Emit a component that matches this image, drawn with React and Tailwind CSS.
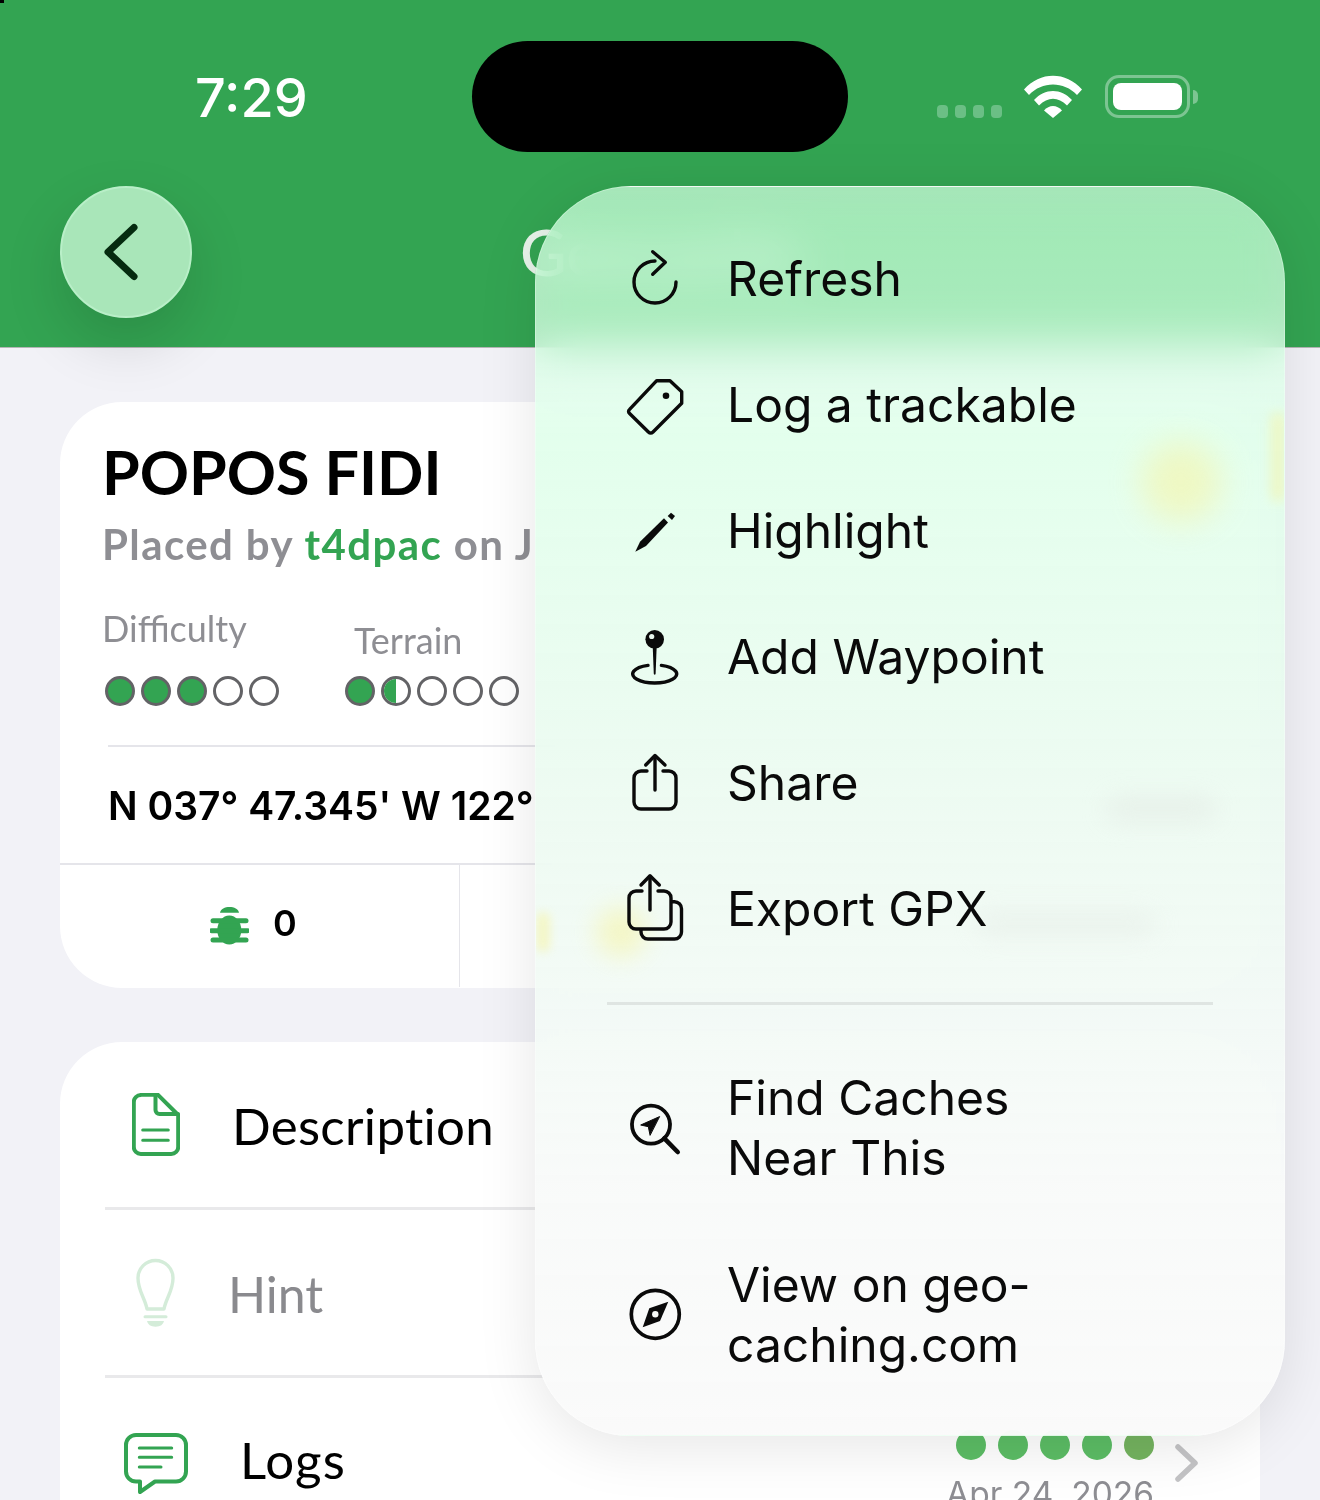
import { Fragment } from 'react';

const GREEN = '#33a452';

function Dot({ type }) {
  if (type === 'half') {
    return (
      <div className="w-[30px] h-[30px] rounded-full border-[3px] border-[#636366] overflow-hidden bg-white">
        <div className="w-1/2 h-full bg-[#33a452]"></div>
      </div>
    );
  }
  return (
    <div className={`w-[30px] h-[30px] rounded-full border-[3px] border-[#636366] ${type === 'full' ? 'bg-[#33a452]' : 'bg-white'}`}></div>
  );
}

function Rating({ values }) {
  return (
    <div className="flex gap-[6px]">
      {values.map((v, i) => (
        <Dot key={i} type={v} />
      ))}
    </div>
  );
}

// menu icons share an 80x80 box centred on the row
function MenuIcon({ children }) {
  return (
    <svg width="80" height="80" viewBox="0 0 80 80" fill="none" stroke="#0a0a0a" strokeWidth="3.4" strokeLinecap="round" strokeLinejoin="round">
      {children}
    </svg>
  );
}

const RefreshIcon = () => (
  <MenuIcon>
    <path d="M61 42A21 21 0 1 1 40 21" />
    <path d="M37.7 11.7L50.3 22.3L37.7 34.3" />
  </MenuIcon>
);

const TagIcon = () => (
  <MenuIcon>
    <path d="M41.7 14.7H55L66.7 25.7V37.3L38 66Q35.7 68.3 33.4 66L14.6 47.5Q12.5 45.5 14.6 43.4Z" />
    <circle cx="51" cy="29.7" r="3.3" fill="#0a0a0a" stroke="none" />
  </MenuIcon>
);

const PencilIcon = () => (
  <MenuIcon>
    <path d="M20.3 59.7L25 49.7L49 26.3L53 30.5L31 54Z" fill="#0a0a0a" stroke="none" />
    <path d="M56 20.7L60 24L57 28L52.7 24Z" fill="#0a0a0a" stroke="none" />
  </MenuIcon>
);

const PinIcon = () => (
  <MenuIcon>
    <path d="M33 47.4A22 9 0 1 0 46.4 47.4" />
    <path d="M37.7 28H41.7L40.6 56Q39.7 57.5 38.8 56Z" fill="#0a0a0a" stroke="none" />
    <circle cx="39.7" cy="21.3" r="9.3" fill="#0a0a0a" stroke="none" />
    <circle cx="36.7" cy="18.5" r="2.6" fill="#e8f5ec" stroke="none" />
  </MenuIcon>
);

const ShareIcon = () => (
  <MenuIcon>
    <path d="M32 27H26a7 7 0 0 0-7 7V58a7 7 0 0 0 7 7H54a7 7 0 0 0 7-7V34a7 7 0 0 0-7-7H48" />
    <path d="M40 12.7V46" />
    <path d="M30.7 21L40 11.5L50 21" />
  </MenuIcon>
);

const ExportIcon = () => (
  <MenuIcon>
    <path d="M27 21H21a7 7 0 0 0-7 7V52a7 7 0 0 0 7 7H49a7 7 0 0 0 7-7V28a7 7 0 0 0-7-7H43" />
    <path d="M35 6.7V40" />
    <path d="M26 15L35 5.8L44.3 15" />
    <path d="M57 31.7H59.5a7 7 0 0 1 7 7V62a7 7 0 0 1-7 7H33a7 7 0 0 1-7-7V60" />
  </MenuIcon>
);

const FindIcon = () => (
  <MenuIcon>
    <circle cx="36" cy="36.7" r="19" strokeWidth="3.8" />
    <path d="M49.3 50.3L62.7 64" strokeWidth="4.6" />
    <path d="M44.3 28.7L25.7 37L33.3 38.7L35 47Z" fill="#0a0a0a" stroke="#0a0a0a" strokeWidth="1" />
  </MenuIcon>
);

const CompassIcon = () => (
  <MenuIcon>
    <circle cx="40.3" cy="39.3" r="24" strokeWidth="3.7" />
    <path d="M53.3 26.7L45 46L27.7 52.3L34.3 33.3Z" fill="#0a0a0a" stroke="none" />
    <circle cx="40.3" cy="39.3" r="3.2" fill="#f6f9f7" stroke="none" />
  </MenuIcon>
);

function MenuRow({ icon, children, tall }) {
  return (
    <div className={`flex items-center pl-[79px] ${tall ? 'h-[187px]' : 'h-[126px]'}`}>
      {icon}
      <div className={`ml-[32px] text-[48px] leading-[60px] text-[#0a0a0a] font-['Inter',sans-serif] ${tall ? 'mt-[1px]' : '-mt-[3px]'}`}>{children}</div>
    </div>
  );
}

function Menu() {
  return (
    <div className="absolute left-[535px] top-[186px] w-[750px] h-[1250px] rounded-[96px] overflow-hidden backdrop-blur-[24px] backdrop-saturate-[1.5] bg-[linear-gradient(180deg,rgba(225,255,235,0.7)_0%,rgba(225,255,235,0.74)_12%,rgba(220,255,232,0.8)_20%,rgba(235,250,240,0.85)_50%,rgba(248,250,249,0.92)_80%,rgba(250,250,250,0.95)_100%)] border border-white/30 shadow-[0_10px_60px_rgba(0,0,0,0.1)]">
      <div className="absolute left-[605px] top-[255px] w-[80px] h-[80px] rounded-full bg-[#f6f4a8] blur-[16px] opacity-60"></div>
      <div className="absolute left-[735px] top-[225px] w-[14px] h-[90px] rounded-full bg-[#f6f4a8] blur-[6px] opacity-60"></div>
      <div className="absolute left-[60px] top-[720px] w-[50px] h-[50px] rounded-full bg-[#f6f4a8] blur-[12px] opacity-60"></div>
      <div className="absolute left-[0px] top-[725px] w-[14px] h-[40px] rounded-full bg-[#f6f4a8] blur-[5px] opacity-60"></div>
      <div className="absolute left-[570px] top-[610px] w-[110px] h-[24px] rounded-full bg-[#e0e6e0] blur-[12px] opacity-50"></div>
      <div className="absolute left-[440px] top-[725px] w-[180px] h-[24px] rounded-full bg-[#e0e6e0] blur-[12px] opacity-40"></div>

      <div className="relative pt-[30px]">
        <MenuRow icon={<RefreshIcon />}>Refresh</MenuRow>
        <MenuRow icon={<TagIcon />}>Log a trackable</MenuRow>
        <MenuRow icon={<PencilIcon />}>Highlight</MenuRow>
        <MenuRow icon={<PinIcon />}>Add Waypoint</MenuRow>
        <MenuRow icon={<ShareIcon />}>Share</MenuRow>
        <MenuRow icon={<ExportIcon />}>Export GPX</MenuRow>
        <div className="mt-[29px] ml-[71px] w-[606px] h-[3px] bg-[#dfe5e2]"></div>
        <div className="mt-[29px]">
          <MenuRow tall icon={<FindIcon />}>
            Find Caches
            <br />
            Near This
          </MenuRow>
          <MenuRow tall icon={<CompassIcon />}>
            View on geo-
            <br />
            caching.com
          </MenuRow>
        </div>
      </div>
    </div>
  );
}

function StatusBar() {
  return (
    <div className="flex items-center h-[111px]">
      <div className="w-[472px] pl-[195px] pt-[2px] text-[54px] leading-none font-medium text-white font-['Inter',sans-serif]">7:29</div>
      <div className="w-[376px] h-[111px] rounded-full bg-black"></div>
      <div className="flex items-center pl-[89px]">
        <div className="flex gap-[7px] self-end">
          {[0, 1, 2, 3].map((i) => (
            <div key={i} className="w-[11px] h-[13px] rounded-[4px] bg-[#6bbf85]"></div>
          ))}
        </div>
        <svg className="ml-[22px]" width="58" height="43" viewBox="0 0 58 43" fill="#fff">
          <path d="M0 14.5C16 -4 42 -4 58 14.5L53 20C40 6 18 6 5 20Z" />
          <path d="M10 25C21 13 37 13 48 25L43 30.5C34 21.5 24 21.5 15 30.5Z" />
          <path d="M20 35.5C25 29.5 33 29.5 38 35.5L29 43Z" />
        </svg>
        <div className="ml-[23px] w-[85px] h-[43px] rounded-[14px] border-[3px] border-[#7dc592] p-[5px]">
          <div className="w-full h-full rounded-[8px] bg-white"></div>
        </div>
        <div className="ml-[3px] w-[5px] h-[14px] rounded-r-full bg-[#7dc592]"></div>
      </div>
    </div>
  );
}

function Header() {
  return (
    <div className="h-[348px] pt-[41px] bg-[#33a452] border-b border-[#b5b5b5]">
      <StatusBar />
      <div className="flex items-center pl-[60px] mt-[34px]">
        <div className="w-[132px] h-[132px] rounded-full bg-[#a9e6b9] border-[2px] border-[#b9efc8] flex items-center justify-center shadow-[0_24px_60px_rgba(0,0,0,0.14)]">
          <svg width="44" height="64" viewBox="0 0 44 64" fill="none" stroke="#062b10" strokeWidth="7" strokeLinecap="round" strokeLinejoin="round">
            <path d="M30 7.5L4 32L30 56.5" />
          </svg>
        </div>
        <div className="ml-[328px] text-[64px] leading-none font-medium text-[#e8f3ea] font-['Lato',sans-serif]">Geocache</div>
      </div>
    </div>
  );
}

function BugIcon() {
  return (
    <svg width="39" height="39" viewBox="0 0 39 39" fill={GREEN} stroke={GREEN}>
      <path d="M10 6.7C11 -1 28 -1 29 6.7Z" stroke="none" />
      <ellipse cx="19.3" cy="24" rx="12" ry="14.5" stroke="none" />
      <path d="M3 14.7H36" strokeWidth="5" strokeLinecap="round" />
      <path d="M1.5 24.7H37.5" strokeWidth="5" strokeLinecap="round" />
      <path d="M3 34H36" strokeWidth="5" strokeLinecap="round" />
    </svg>
  );
}

function SummaryCard() {
  return (
    <div className="h-[586px] rounded-[62px] bg-white overflow-hidden font-['Lato',sans-serif]">
      <div className="pl-[42px] pt-[35px]">
        <div className="text-[61px] leading-[70px] font-bold text-black">POPOS FIDI</div>
        <div className="mt-[12px] text-[42px] leading-[50px] tracking-[1.4px] font-bold text-[#8e8e93] whitespace-nowrap">
          Placed by <span className="text-[#33a452]">t4dpac</span> on J
        </div>
      </div>
      <div className="flex pl-[45px] mt-[37px]">
        <div className="w-[240px]">
          <div className="text-[36px] leading-[44px] text-[#8e8e93] -ml-[3px]">Difficulty</div>
          <div className="mt-[26px]">
            <Rating values={['full', 'full', 'full', 'empty', 'empty']} />
          </div>
        </div>
        <div className="pt-[12px]">
          <div className="text-[36px] leading-[44px] text-[#8e8e93] ml-[9px]">Terrain</div>
          <div className="mt-[14px]">
            <Rating values={['full', 'half', 'empty', 'empty', 'empty']} />
          </div>
        </div>
      </div>
      <div className="ml-[48px] mt-[39px] h-[2px] bg-[#e5e5ea]"></div>
      <div className="h-[116px] pl-[48px] pt-[2px] flex items-center text-[39px] font-semibold text-black font-['Inter',sans-serif] whitespace-nowrap">
        N 037° 47.345' W 122°
      </div>
      <div className="h-[2px] bg-[#e5e5ea]"></div>
      <div className="flex h-[122px]">
        <div className="w-[400px] border-r border-[#e5e5ea] flex items-center pl-[150px] pb-[2px]">
          <BugIcon />
          <span className="ml-[24px] -mt-[4px] text-[36px] font-semibold text-black font-['Inter',sans-serif]">0</span>
        </div>
      </div>
    </div>
  );
}

function SectionCard() {
  return (
    <div className="mt-[54px] h-[600px] rounded-t-[62px] bg-white font-['Lato',sans-serif]">
      <div className="h-[165px] flex items-center pl-[72px]">
        <svg width="48" height="63" viewBox="0 0 48 63" fill="none" stroke={GREEN} strokeWidth="4" strokeLinecap="round" strokeLinejoin="round">
          <path d="M9 1.8H26L46.2 22V54a7 7 0 0 1-7 7H8.8a7 7 0 0 1-7-7V9a7 7 0 0 1 7-7" />
          <path d="M23.5 2V17a4 4 0 0 0 4 4H46" />
          <path d="M10.7 37H36.3M10.7 47.3H36.3" strokeWidth="3" />
        </svg>
        <span className="ml-[52px] mt-[4px] text-[51px] tracking-[0.3px] text-black">Description</span>
      </div>
      <div className="ml-[45px] h-[3px] bg-[#e9e9eb]"></div>
      <div className="h-[165px] flex items-center pl-[76px]">
        <svg width="39" height="70" viewBox="0 0 39 70" fill="none" stroke="#d4ecd9" strokeWidth="3.4" strokeLinecap="round" strokeLinejoin="round">
          <path d="M11 51C9 40 2 33 2 20A17.5 17.5 0 0 1 37 20C37 33 30 40 28 51Z" />
          <path d="M9 58.7H30" strokeWidth="3" />
          <path d="M11 63H28Q27 68.7 19.5 68.7Q12 68.7 11 63Z" fill="#d4ecd9" stroke="none" />
        </svg>
        <span className="ml-[53px] mt-[4px] text-[50px] text-[#8a8a8e]">Hint</span>
      </div>
      <div className="ml-[45px] h-[3px] bg-[#e9e9eb]"></div>
      <div className="flex items-start pl-[64px]">
        <svg className="mt-[55px]" width="65" height="61" viewBox="0 0 65 61" fill="none" stroke={GREEN} strokeWidth="4" strokeLinecap="round" strokeLinejoin="round">
          <path d="M12 2H52a10 10 0 0 1 10 10V38.5a10 10 0 0 1-10 10H31L16 59V48.5H12a10 10 0 0 1-10-10V12a10 10 0 0 1 10-10Z" />
          <path d="M15.3 15H47.7M15.3 24.3H47.7M15.3 34H37" strokeWidth="3" />
        </svg>
        <span className="ml-[51px] mt-[52px] text-[51px] tracking-[1px] leading-[60px] text-black">Logs</span>
        <div className="ml-auto mr-[61px] flex items-start">
          <div className="pt-[52px] flex flex-col items-end">
            <div className="flex gap-[12px]">
              <div className="w-[30px] h-[30px] rounded-full bg-[#5cbd65]"></div>
              <div className="w-[30px] h-[30px] rounded-full bg-[#5cbd65]"></div>
              <div className="w-[30px] h-[30px] rounded-full bg-[#5cbd65]"></div>
              <div className="w-[30px] h-[30px] rounded-full bg-[#5cbd65]"></div>
              <div className="w-[30px] h-[30px] rounded-full bg-[#74b35f]"></div>
            </div>
            <div className="mt-[12px] text-[33.5px] leading-[44px] text-[#8e8e93] whitespace-nowrap font-['Inter',sans-serif]">Apr 24, 2026</div>
          </div>
          <svg className="ml-[21px] mt-[66px]" width="24" height="38" viewBox="0 0 24 38" fill="none" stroke="#c4c4c6" strokeWidth="5.5" strokeLinecap="round" strokeLinejoin="round">
            <path d="M3 3L20 19L3 35" />
          </svg>
        </div>
      </div>
    </div>
  );
}

export default function App() {
  return (
    <div className="relative w-[1320px] h-[1500px] overflow-hidden bg-[#f2f2f7]">
      <Fragment>
        <div className="absolute top-0 left-0 w-[4px] h-[3px] bg-black"></div>
        <Header />
        <div className="px-[60px] pt-[54px]">
          <SummaryCard />
          <SectionCard />
        </div>
        <Menu />
      </Fragment>
    </div>
  );
}
